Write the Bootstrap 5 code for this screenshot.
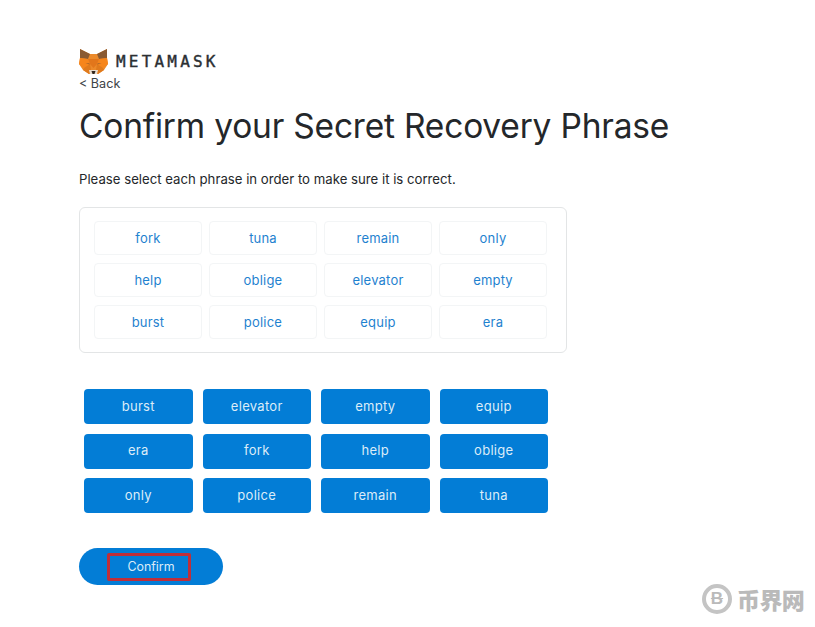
<!DOCTYPE html>
<html lang="en">
<head>
    <meta charset="UTF-8" />
    <title>MetaMask</title>
    <link href="https://cdn.jsdelivr.net/npm/bootstrap@5.3.2/dist/css/bootstrap.min.css" rel="stylesheet">
    <style>
        body {
            font-family: Inter, "Liberation Sans", sans-serif;
            background: #fff;
            color: #24272a;
        }

        .page-wrap {
            width: 815px;
            height: 627px;
            padding: 49px 0 0 79px;
            position: relative;
            overflow: hidden;
        }

        .fox-logo {
            width: 29px;
            height: 26px;
        }

        .brand-name {
            font-family: "DejaVu Sans Mono", monospace;
            font-size: 16px;
            font-weight: 400;
            -webkit-text-stroke: 0.4px #2b2f33;
            letter-spacing: 3.2px;
            color: #2b2f33;
            line-height: 26px;
            margin-left: 8px;
        }

        .back-link {
            font-size: 12.6px;
            line-height: 16px;
            color: #3d4347;
            text-decoration: none;
            margin-top: 1px;
        }

        .page-title {
            font-size: 33.5px;
            font-weight: 400;
            line-height: 44px;
            letter-spacing: -0.2px;
            color: #24272a;
            margin: 12px 0 0;
        }

        .page-note {
            font-size: 13.2px;
            line-height: 16px;
            color: #24272a;
            margin: 23px 0 0;
        }

        .slot-box {
            width: 488px;
            height: 146px;
            margin-top: 20px;
            padding: 13px 0 0 14px;
            border: 1px solid #e3e5e6;
            border-radius: 6px;
        }

        .slot-grid {
            display: grid;
            grid-template-columns: repeat(4, 108px);
            grid-auto-rows: 34px;
            column-gap: 7px;
            row-gap: 8px;
        }

        .slot-chip {
            display: flex;
            align-items: center;
            justify-content: center;
            padding-top: 2px;
            border: 1px solid #f3f5f6;
            border-radius: 4px;
            font-size: 13px;
            letter-spacing: 0.2px;
            color: #1f82cf;
        }

        .word-grid {
            display: grid;
            grid-template-columns: repeat(4, 108.5px);
            grid-auto-rows: 35px;
            column-gap: 10px;
            row-gap: 9.7px;
            margin: 36px 0 0 5px;
        }

        .word-btn {
            display: flex;
            align-items: center;
            justify-content: center;
            padding: 0;
            border: 0;
            border-radius: 4px;
            background: #037dd6;
            color: #dcecf8;
            font-size: 13px;
            letter-spacing: 0.3px;
        }

        .confirm-btn {
            display: flex;
            align-items: center;
            justify-content: center;
            width: 144px;
            height: 37px;
            margin-top: 35px;
            padding: 0 32px 0 28px;
            border: 0;
            border-radius: 19px;
            background: #037dd6;
            color: #dcecf8;
            font-size: 12.4px;
        }

        .confirm-mark {
            display: flex;
            align-items: center;
            justify-content: center;
            width: 84px;
            height: 28px;
            padding-left: 4px;
            border: 3px solid #bf2f3a;
            border-radius: 2px;
        }

        .stamp {
            position: absolute;
            left: 702px;
            top: 584px;
            color: #bababa;
        }

        .stamp-ring {
            display: flex;
            align-items: center;
            justify-content: center;
            width: 30px;
            height: 30px;
            border: 4px solid #c4c4c4;
            border-radius: 50%;
            font-family: "Liberation Sans", sans-serif;
            font-size: 17px;
            font-weight: 700;
            text-decoration: line-through;
        }

        .stamp-text {
            font-family: "Noto Sans CJK SC", sans-serif;
            font-size: 23px;
            font-weight: 900;
            line-height: 30px;
            letter-spacing: -0.6px;
            margin-left: 5px;
        }
    </style>
</head>
<body>
    <div class="page-wrap">
        <!-- Logo -->
        <div class="d-flex align-items-center">
            <svg class="fox-logo" viewBox="0 0 29 26">
                <polygon points="1,0 11,5 18,5 28,0 28,9 29,15 25,21 19,25 10,25 4,21 0,15 1,9" fill="#ec8a2a" />
                <polygon points="1,0 11,5 9,10 1,9" fill="#8a5a32" />
                <polygon points="28,0 18,5 20,10 28,9" fill="#8a5a32" />
                <polygon points="0,15 1,9 9,10 11,15 5,19" fill="#f6851b" />
                <polygon points="29,15 28,9 20,10 18,15 24,19" fill="#f6851b" />
                <polygon points="9,10 20,10 18,15 14.5,19 11,15" fill="#e2761b" />
                <polygon points="5,19 11,15 12,21 10,25 4,21" fill="#e07a1c" />
                <polygon points="24,19 18,15 17,21 19,25 25,21" fill="#e07a1c" />
                <polygon points="6.5,14 10.5,14.5 10.5,15.5" fill="#8a5a32" />
                <polygon points="22.5,14 18.5,14.5 18.5,15.5" fill="#8a5a32" />
                <polygon points="10,21 19,21 18,25 11,25" fill="#e8dccf" />
                <polygon points="12.5,22 16.5,22 15.5,25 13.5,25" fill="#33261c" />
            </svg>
            <span class="brand-name">METAMASK</span>
        </div>
        <a class="back-link d-block" href="#">&lt; Back</a>

        <h1 class="page-title">Confirm your Secret Recovery Phrase</h1>
        <p class="page-note">Please select each phrase in order to make sure it is correct.</p>

        <!-- Secilen kelimeler -->
        <div class="slot-box">
            <div class="slot-grid">
                <div class="slot-chip">fork</div>
                <div class="slot-chip">tuna</div>
                <div class="slot-chip">remain</div>
                <div class="slot-chip">only</div>
                <div class="slot-chip">help</div>
                <div class="slot-chip">oblige</div>
                <div class="slot-chip">elevator</div>
                <div class="slot-chip">empty</div>
                <div class="slot-chip">burst</div>
                <div class="slot-chip">police</div>
                <div class="slot-chip">equip</div>
                <div class="slot-chip">era</div>
            </div>
        </div>

        <!-- Kelime butonlari -->
        <div class="word-grid">
            <button class="btn word-btn">burst</button>
            <button class="btn word-btn">elevator</button>
            <button class="btn word-btn">empty</button>
            <button class="btn word-btn">equip</button>
            <button class="btn word-btn">era</button>
            <button class="btn word-btn">fork</button>
            <button class="btn word-btn">help</button>
            <button class="btn word-btn">oblige</button>
            <button class="btn word-btn">only</button>
            <button class="btn word-btn">police</button>
            <button class="btn word-btn">remain</button>
            <button class="btn word-btn">tuna</button>
        </div>

        <button class="btn confirm-btn"><span class="confirm-mark">Confirm</span></button>

        <!-- Watermark -->
        <div class="stamp d-flex align-items-center">
            <div class="stamp-ring">B</div>
            <div class="stamp-text">币界网</div>
        </div>
    </div>

    <script src="https://cdn.jsdelivr.net/npm/bootstrap@5.3.2/dist/js/bootstrap.bundle.min.js"></script>
</body>
</html>
